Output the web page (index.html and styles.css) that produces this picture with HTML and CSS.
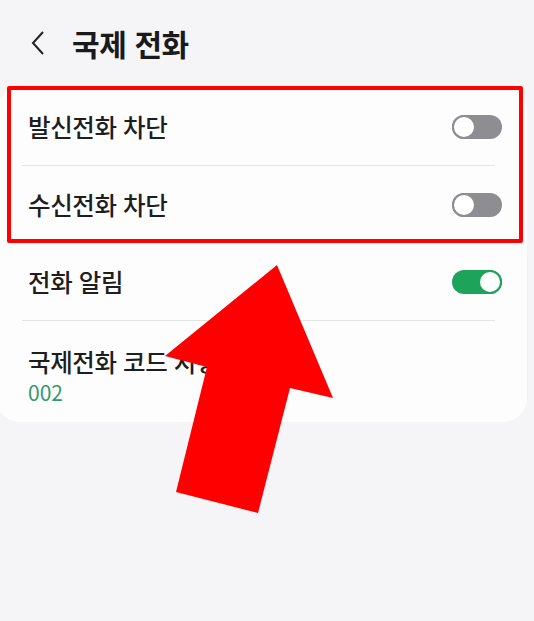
FILE: index.html
```html
<!DOCTYPE html>
<html lang="ko">
<head>
    <meta charset="UTF-8">
    <meta name="viewport" content="width=device-width, initial-scale=1.0">
    <title>국제 전화</title>
    <link rel="stylesheet" href="styles.css">
</head>
<body>
    <div class="screen">
        <!-- Header with back button -->
        <div class="header">
            <svg class="back" width="16" height="26" viewBox="0 0 16 26">
                <polyline points="13,2 3,13 13,24" fill="none" stroke="#222" stroke-width="2"/>
            </svg>
            <h1 class="title">국제 전화</h1>
        </div>

        <!-- Settings card -->
        <div class="card">
            <div class="row">
                <span class="label">발신전화 차단</span>
                <div class="toggle"><div class="knob"></div></div>
            </div>
            <div class="divider"></div>
            <div class="row">
                <span class="label">수신전화 차단</span>
                <div class="toggle"><div class="knob"></div></div>
            </div>
            <div class="row">
                <span class="label">전화 알림</span>
                <div class="toggle on"><div class="knob"></div></div>
            </div>
            <div class="divider"></div>
            <div class="row two-line">
                <span class="label">국제전화 코드 지정</span>
                <span class="sub">002</span>
            </div>

            <!-- Annotation: red box around blocking options -->
            <div class="highlight"></div>
        </div>

        <!-- Annotation: red arrow -->
        <svg class="arrow" width="534" height="621" viewBox="0 0 534 621">
            <polygon points="277,265 333,398 290,388 258,513 176,492 207,367 165,356" fill="#ff0000"/>
        </svg>
    </div>
</body>
</html>
```

FILE: styles.css
```css
body {
    margin: 0;
    background: #f5f5f7;
    font-family: "Noto Sans CJK KR", "Noto Sans", sans-serif;
    color: #1e1e1e;
}
.screen {
    position: relative;
    height: 621px;
    overflow: hidden;
}
.header {
    display: flex;
    align-items: center;
    height: 88px;
    padding-left: 30px;
    padding-bottom: 2px;
    box-sizing: border-box;
}
.back {
    margin-right: 26px;
}
.title {
    margin: 0;
    font-size: 30px;
    font-weight: 700;
    letter-spacing: -0.4px;
    color: #1a1a1a;
}
.card {
    position: relative;
    margin-left: -4px;
    width: 531px;
    background: #fdfdfe;
    border-radius: 24px;
}
.row {
    display: flex;
    justify-content: space-between;
    align-items: center;
    height: 77px;
    padding: 0 25px 0 32px;
    box-sizing: border-box;
}
.label {
    font-size: 24.5px;
    font-weight: 500;
    letter-spacing: -0.4px;
}
.two-line {
    flex-direction: column;
    align-items: flex-start;
    justify-content: center;
    height: 101px;
    padding-top: 7px;
}
.two-line .label {
    line-height: 34px;
}
.sub {
    font-size: 21px;
    color: #35996a;
    line-height: 27px;
}
.divider {
    height: 1px;
    background: #e4e4e6;
    margin: 0 32px 0 26px;
}
.toggle {
    position: relative;
    width: 50px;
    height: 24px;
    border-radius: 12px;
    background: #8d8d92;
}
.knob {
    position: absolute;
    left: 0;
    top: 0;
    width: 20px;
    height: 20px;
    border-radius: 50%;
    background: #fff;
    border: 2px solid #8d8d92;
}
.toggle.on {
    background: #1ea35a;
}
.toggle.on .knob {
    left: auto;
    right: 0;
    border-color: #1ea35a;
}
.highlight {
    position: absolute;
    left: 11px;
    top: -2px;
    width: 508px;
    height: 149px;
    border: 4px solid #ff0000;
    border-radius: 2px;
}
.arrow {
    position: absolute;
    left: 0;
    top: 0;
}
```
